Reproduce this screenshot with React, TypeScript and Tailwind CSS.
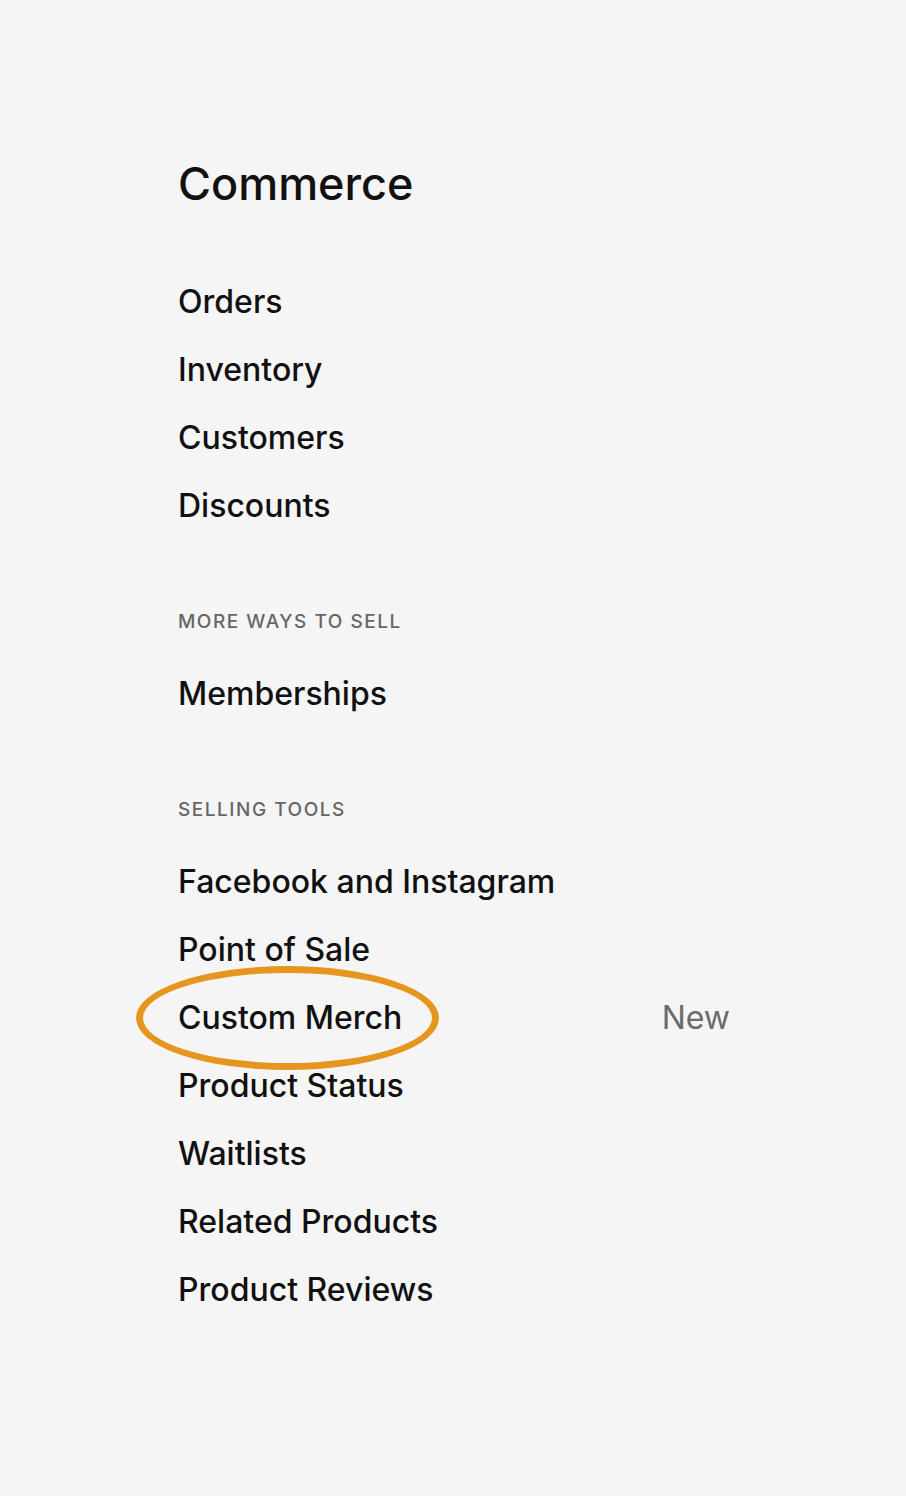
const primary = ['Orders', 'Inventory', 'Customers', 'Discounts'];
const tools = ['Facebook and Instagram', 'Point of Sale', 'Custom Merch', 'Product Status', 'Waitlists', 'Related Products', 'Product Reviews'];

function Row({ label, badge, circled }: { label: string; badge?: string; circled?: boolean }) {
  return (
    <div className="relative flex h-[68px] items-center justify-between">
      <span className="text-[32px] font-medium text-[#111]">{label}</span>
      {badge && <span className="text-[32px] text-[#6b6b6b]">{badge}</span>}
      {circled && (
        <div className="pointer-events-none absolute left-[-42px] top-[-18px] h-[104px] w-[303px] rounded-[50%] border-[7px] border-[#e5961f]" />
      )}
    </div>
  );
}

export default function App() {
  return (
    <div className="min-h-[1496px] bg-[#f5f5f5] pl-[178px] pt-[158px]" style={{ fontFamily: 'Inter, "Liberation Sans", sans-serif' }}>
      <div className="w-[552px]">
        <h1 className="text-[45px] font-medium leading-[52px] text-[#111]">Commerce</h1>

        <div className="mt-[58px]">
          {primary.map((p) => <Row key={p} label={p} />)}
        </div>

        <div className="mt-[70px] text-[19px] font-medium uppercase leading-[24px] tracking-[0.08em] text-[#666]">More ways to sell</div>
        <div className="mt-[26px]">
          <Row label="Memberships" />
        </div>

        <div className="mt-[70px] text-[19px] font-medium uppercase leading-[24px] tracking-[0.08em] text-[#666]">Selling tools</div>
        <div className="mt-[26px]">
          {tools.map((t) => (
            <Row key={t} label={t} badge={t === 'Custom Merch' ? 'New' : undefined} circled={t === 'Custom Merch'} />
          ))}
        </div>
      </div>
    </div>
  );
}
